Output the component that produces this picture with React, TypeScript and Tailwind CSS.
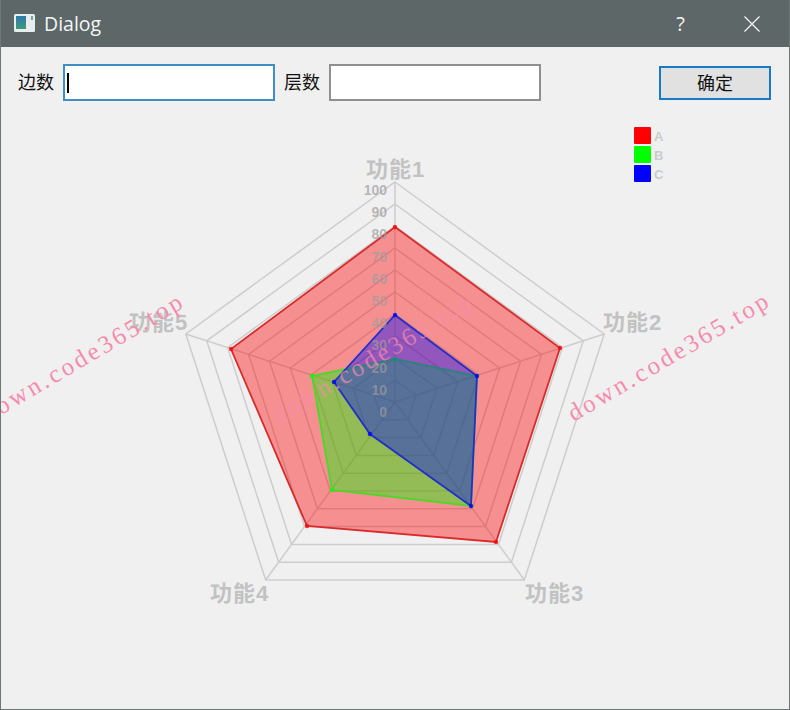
const CX = 395;
const CY = 402;
const R = 220;
const FONT = '"Liberation Sans", "Noto Sans CJK SC", sans-serif';

/** Vertices of a ring at `k` (0..1) of the outer radius, clockwise from the top */
function ring(k: number) {
  return [0, 1, 2, 3, 4].map((i) => {
    const a = (i * 72 * Math.PI) / 180;
    return [CX + R * k * Math.sin(a), CY - R * k * Math.cos(a)];
  });
}

const toPoints = (pts: number[][]) => pts.map((p) => p.join(',')).join(' ');

const series = [
  { color: '#ff0000', edge: '#d92b2b', pts: [[395, 227], [560, 348], [496, 542], [307, 526], [231, 349]] },
  { color: '#00ff00', edge: '#4fd62a', pts: [[395, 359], [477, 376], [471, 506], [332, 490], [312, 376]] },
  { color: '#0000ff', edge: '#2230c8', pts: [[395, 315], [477, 376], [471, 506], [370, 434], [334, 382]] },
];

const axisLabels = [
  { text: '功能1', x: 366, y: 177 },
  { text: '功能2', x: 603, y: 330 },
  { text: '功能3', x: 525, y: 601 },
  { text: '功能4', x: 210, y: 601 },
  { text: '功能5', x: 129, y: 330 },
];

const legend = [
  { name: 'A', color: '#ff0000', y: 127 },
  { name: 'B', color: '#00ff00', y: 146 },
  { name: 'C', color: '#0000ff', y: 165 },
];

function Radar() {
  return (
    <svg width={788} height={608} viewBox="1 101 788 608" className="block" style={{ fontFamily: FONT }}>
      {/* Grid */}
      {[1, 2, 3, 4, 5, 6, 7, 8, 9, 10].map((n) => (
        <polygon key={n} points={toPoints(ring(n / 10))} fill="none" stroke="#cdcdcd" strokeWidth={1.5} />
      ))}
      {ring(1).map((p, i) => (
        <line key={i} x1={CX} y1={CY} x2={p[0]} y2={p[1]} stroke="#cdcdcd" strokeWidth={1.5} />
      ))}

      {/* Series */}
      {series.map((s) => (
        <g key={s.color}>
          <polygon points={toPoints(s.pts)} fill={s.color} fillOpacity={0.4} stroke={s.edge} strokeWidth={1.8} />
          {s.pts.map((p, i) => (
            <circle key={i} cx={p[0]} cy={p[1]} r={2.2} fill={s.color} fillOpacity={0.8} />
          ))}
        </g>
      ))}

      {/* Scale */}
      {[0, 10, 20, 30, 40, 50, 60, 70, 80, 90, 100].map((v) => (
        <text key={v} x={387} y={417 - v * 2.22} textAnchor="end" fontSize={14} fontWeight={700} fill="#9c9c9c" fillOpacity={0.7}>
          {v}
        </text>
      ))}

      {axisLabels.map((l) => (
        <text key={l.text} x={l.x} y={l.y} fontSize={22} fontWeight={700} fill="#c2c2c2" letterSpacing={1}>
          {l.text}
        </text>
      ))}

      {/* Legend */}
      {legend.map((l) => (
        <g key={l.name}>
          <rect x={634} y={l.y} width={17} height={17} rx={1} fill={l.color} />
          <text x={654} y={l.y + 14} fontSize={13} fontWeight={700} fill="#cccccc">
            {l.name}
          </text>
        </g>
      ))}
    </svg>
  );
}

function Watermark({ className }: { className: string }) {
  return (
    <span className={`absolute -translate-x-1/2 -translate-y-1/2 rotate-[-30.5deg] whitespace-nowrap font-['Liberation_Serif',serif] text-[25px] leading-none tracking-[2.9px] text-[#f78bae] pointer-events-none ${className}`}>
      down.code365.top
    </span>
  );
}

export default function App() {
  return (
    <div className="relative w-[790px] h-[710px] overflow-hidden flex flex-col bg-[#f0f0f0] border-x border-b border-[#6f7777] font-['Liberation_Sans','Noto_Sans_CJK_SC',sans-serif]">
      {/* Title bar */}
      <div className="h-[47px] shrink-0 -mx-px flex items-center bg-[#5e6767] text-[#f4f6f6]">
        <svg width={21} height={18} viewBox="0 0 21 18" className="ml-[14px] mb-px">
          <defs>
            <linearGradient id="dialog-icon" x1="0" y1="0" x2="0" y2="1">
              <stop offset="0" stopColor="#2f78b0" />
              <stop offset="1" stopColor="#3f9a78" />
            </linearGradient>
          </defs>
          <rect width={21} height={18} rx={1.5} fill="#e8eeee" />
          <rect x={2} y={2} width={10} height={13} fill="url(#dialog-icon)" />
          <rect x={17} y={2} width={2} height={4} fill="#7f9a9a" />
        </svg>
        <span className="ml-[9px] text-[19.5px] leading-none font-['Open_Sans',sans-serif]">Dialog</span>
        <span className="ml-auto text-[20px] leading-none font-['Open_Sans',sans-serif]">?</span>
        <svg width={16} height={16} viewBox="0 0 16 16" className="ml-[59px] mr-[30px]" fill="none" stroke="#f4f6f6" strokeWidth={1.3}>
          <path d="M0.5 0.5 15.5 15.5 M15.5 0.5 0.5 15.5" />
        </svg>
      </div>

      {/* Toolbar */}
      <div className="h-[54px] shrink-0 flex items-start pt-[17px] pl-[17px] text-[18px] text-[#111]">
        <span className="h-[37px] flex items-center leading-none w-[45px]">边数</span>
        <div className="w-[212px] h-[37px] bg-white border-2 border-[#3f8fc4] flex items-center pl-[2px]">
          <div className="w-[2px] h-[20px] bg-black" />
        </div>
        <span className="h-[37px] flex items-center leading-none ml-[9px] w-[45px]">层数</span>
        <div className="w-[212px] h-[37px] bg-white border-2 border-[#8f8f8f]" />
        <button className="ml-[118px] mt-[2px] w-[112px] h-[34px] pt-[2px] flex items-center justify-center bg-[#e1e1e1] border-2 border-[#1f78c4] shadow-[inset_0_0_0_1px_#d3e4f1] leading-none text-[18px] text-[#111]">
          确定
        </button>
      </div>

      <Radar />

      <Watermark className="left-[82px] top-[357px]" />
      <Watermark className="left-[372px] top-[358px] opacity-70" />
      <Watermark className="left-[668px] top-[356px]" />
    </div>
  );
}
